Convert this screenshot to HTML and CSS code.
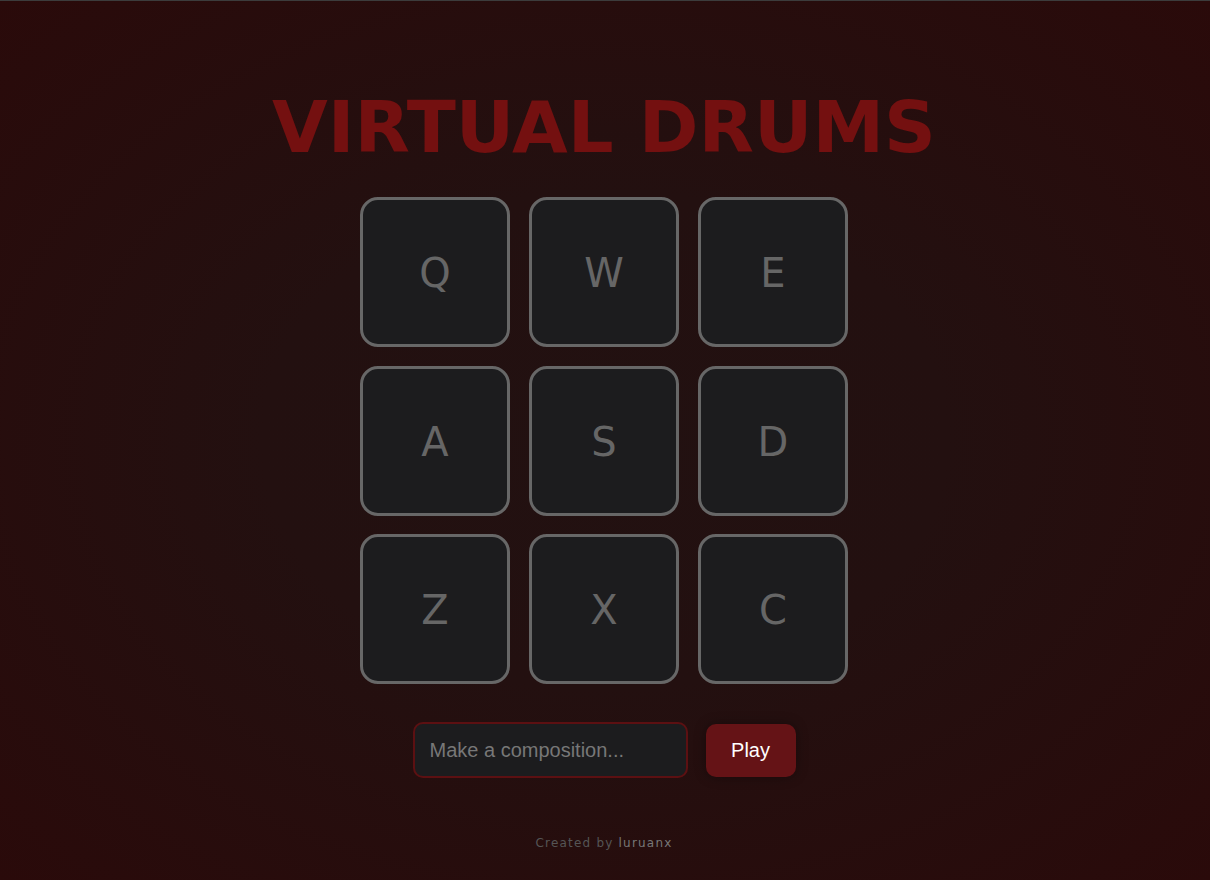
FILE: index.html
```html
<!DOCTYPE html>
<html lang="en">
<head>
<meta charset="utf-8">
<title>Virtual Drums</title>
<link rel="stylesheet" href="styles.css">
</head>
<body>
<main class="app">
  <h1 class="title">VIRTUAL DRUMS</h1>
  <div class="pads">
    <div class="pad">Q</div>
    <div class="pad">W</div>
    <div class="pad">E</div>
    <div class="pad">A</div>
    <div class="pad">S</div>
    <div class="pad">D</div>
    <div class="pad">Z</div>
    <div class="pad">X</div>
    <div class="pad">C</div>
  </div>
  <div class="controls">
    <input class="composition" type="text" placeholder="Make a composition...">
    <button class="play">Play</button>
  </div>
  <footer class="credit">Created by <span class="author">luruanx</span></footer>
</main>
</body>
</html>
```
FILE: styles.css
```css
html, body {
  margin: 0;
  padding: 0;
  height: 100%;
}
body {
  border-top: 1px solid #3c3c3c;
  box-sizing: border-box;
  background: radial-gradient(ellipse at 50% 50%, #221111 0%, #231010 40%, #2a0a0a 100%);
  font-family: "DejaVu Sans", Verdana, sans-serif;
  overflow: hidden;
}
.app {
  display: flex;
  flex-direction: column;
  align-items: center;
  padding-top: 90px;
  padding-right: 2px;
}
.title {
  margin: 0;
  font-size: 72px;
  line-height: 72px;
  font-weight: bold;
  color: #741010;
}
.pads {
  margin-top: 34px;
  display: grid;
  grid-template-columns: repeat(3, 150px);
  grid-auto-rows: 150px;
  gap: 18.5px 19px;
}
.pad {
  box-sizing: border-box;
  border: 3px solid #676767;
  border-radius: 18px;
  background: #1c1c1e;
  color: #666;
  font-size: 40px;
  padding-top: 2px;
  display: flex;
  align-items: center;
  justify-content: center;
}
.controls {
  margin-top: 38px;
  display: flex;
  align-items: center;
  gap: 18px;
}
.composition {
  box-sizing: border-box;
  width: 275px;
  height: 56px;
  border: 2px solid #5c1012;
  border-radius: 10px;
  background: #1c1c1e;
  padding: 0 15px;
  font-family: "Liberation Sans", Arial, sans-serif;
  font-size: 20px;
  color: #999;
  outline: none;
}
.composition::placeholder {
  color: #777;
}
.play {
  box-sizing: border-box;
  width: 90px;
  height: 53px;
  border: none;
  border-radius: 10px;
  background: #651316;
  color: #fff;
  font-family: "Liberation Sans", Arial, sans-serif;
  font-size: 20px;
  box-shadow: 0 0 12px rgba(0, 0, 0, 0.35);
}
.credit {
  margin-top: 58px;
  font-size: 12px;
  letter-spacing: 1.2px;
  color: #555;
}
.author {
  color: #777;
}
```
